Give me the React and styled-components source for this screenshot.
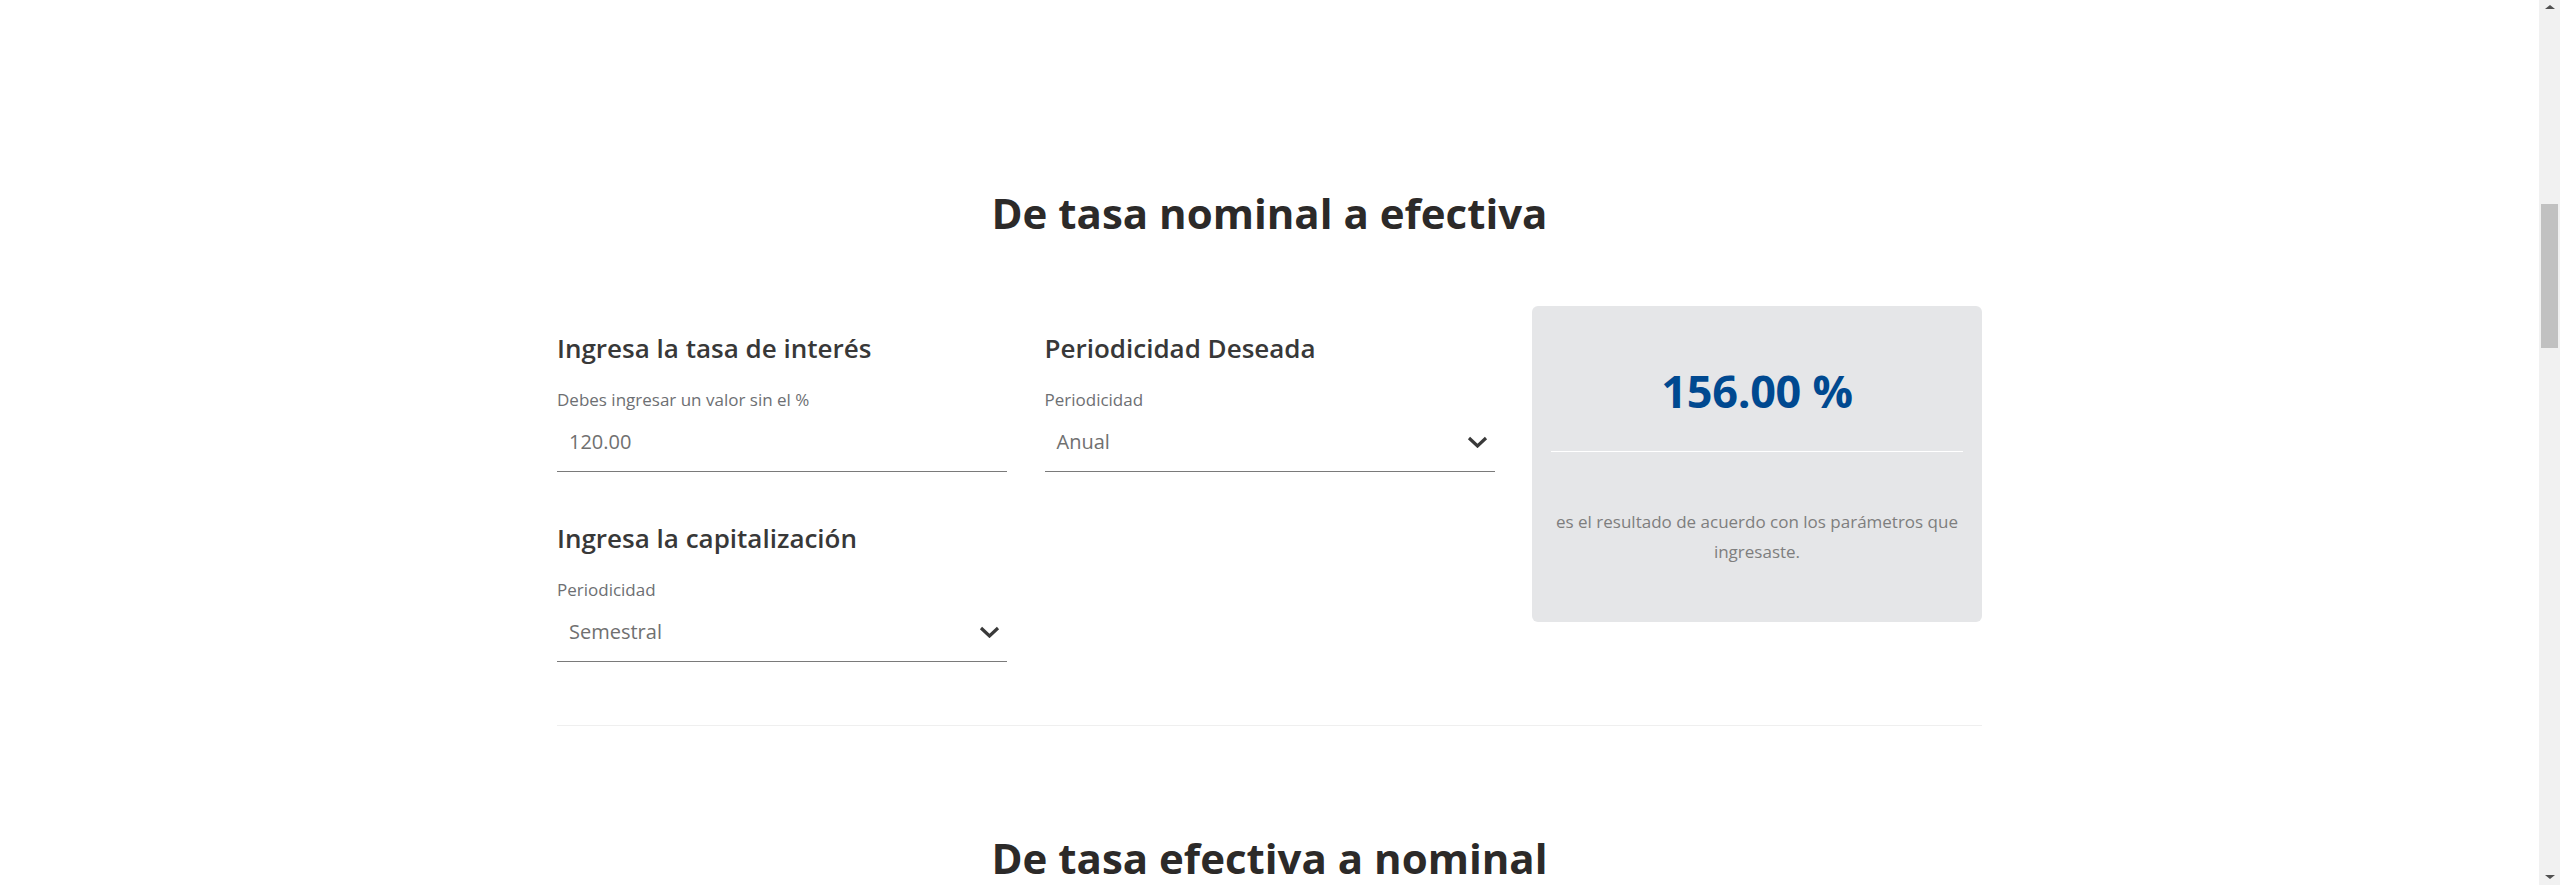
import React from "react";
import styled, { createGlobalStyle } from "styled-components";

const GlobalStyle = createGlobalStyle`
  html, body {
    margin: 0;
    padding: 0;
    height: 885px;
    overflow: hidden;
    background: #ffffff;
    font-family: "Open Sans", "Liberation Sans", sans-serif;
  }
  * { box-sizing: border-box; }
`;

const Page = styled.div`
  display: flex;
  width: 100%;
  height: 885px;
  overflow: hidden;
`;

const Main = styled.main`
  flex: 1;
  min-width: 0;
  padding-top: 187px;
`;

const Container = styled.div`
  width: 1425px;
  margin: 0 auto;
`;

const Title = styled.h2`
  margin: 0;
  text-align: center;
  font-family: "Open Sans", sans-serif;
  font-weight: 700;
  font-size: 42px;
  line-height: 52px;
  letter-spacing: 0;
  color: #2c2a29;
`;

const Grid = styled.div`
  display: grid;
  grid-template-columns: repeat(3, 450px);
  column-gap: 37.5px;
  row-gap: 24px;
  margin-top: 67px;
  align-items: start;
`;

const Field = styled.div`
  padding-top: 26px;
  grid-column: ${(p) => p.$col};
  grid-row: ${(p) => p.$row};
`;

const FieldHeading = styled.h3`
  margin: 0 0 24px;
  font-weight: 600;
  font-size: 26px;
  line-height: 32px;
  color: #383838;
`;

const Label = styled.label`
  display: block;
  font-size: 17px;
  line-height: 24px;
  color: #6d6f73;
`;

const InputBox = styled.div`
  display: flex;
  align-items: center;
  justify-content: space-between;
  padding: 18px 7px 17px 12px;
  border-bottom: 1px solid #7a7a7a;
`;

const Value = styled.span`
  font-size: 20px;
  line-height: 24px;
  color: #707070;
`;

const Chevron = styled.svg`
  width: 21px;
  height: 12px;
  flex: none;
`;

const Card = styled.div`
  grid-column: 3;
  grid-row: 1 / span 2;
  height: 316px;
  background: #e5e6e8;
  border-radius: 6px;
  padding: 57px 19px 0;
  text-align: center;
`;

const Result = styled.div`
  font-weight: 700;
  font-size: 45px;
  line-height: 56px;
  color: #004990;
  letter-spacing: -0.3px;
`;

const Divider = styled.hr`
  margin: 32px 0 0;
  border: 0;
  border-top: 1px solid #ffffff;
`;

const Caption = styled.p`
  margin: 55px 0 0;
  padding: 0;
  font-size: 17px;
  line-height: 30px;
  color: #7e7e7e;
`;

const Separator = styled.hr`
  margin: 63px 0 0;
  border: 0;
  border-top: 1px solid #efefef;
`;

const SecondTitle = styled(Title)`
  margin-top: 106px;
`;

const Scrollbar = styled.div`
  width: 21px;
  flex: none;
  height: 885px;
  background: #f1f1f1;
  display: flex;
  flex-direction: column;
  align-items: center;
`;

const Arrow = styled.div`
  width: 0;
  height: 0;
  margin: ${(p) => (p.$down ? "auto 0 6px" : "5px 0 0")};
  border-left: 5px solid transparent;
  border-right: 5px solid transparent;
  ${(p) =>
    p.$down
      ? "border-top: 4px solid #505050;"
      : "border-bottom: 4px solid #505050;"}
`;

const Thumb = styled.div`
  width: 17px;
  height: 144px;
  margin-top: 195px;
  background: #c1c1c1;
`;

const ChevronIcon = () => (
  <Chevron viewBox="0 0 21 12" aria-hidden="true">
    <path
      d="M2 2 L10.5 10 L19 2"
      fill="none"
      stroke="#3a3a3a"
      strokeWidth="3.2"
      strokeLinecap="butt"
      strokeLinejoin="miter"
    />
  </Chevron>
);

const FormField = ({ col, row, heading, label, value, select }) => (
  <Field $col={col} $row={row}>
    <FieldHeading>{heading}</FieldHeading>
    <Label>{label}</Label>
    <InputBox>
      <Value>{value}</Value>
      {select && <ChevronIcon />}
    </InputBox>
  </Field>
);

export default function App() {
  return (
    <>
      <GlobalStyle />
      <Page>
        <Main>
          <Container>
            <Title>De tasa nominal a efectiva</Title>
            <Grid>
              <FormField
                col={1}
                row={1}
                heading="Ingresa la tasa de interés"
                label="Debes ingresar un valor sin el %"
                value="120.00"
              />
              <FormField
                col={2}
                row={1}
                heading="Periodicidad Deseada"
                label="Periodicidad"
                value="Anual"
                select
              />
              <Card>
                <Result>156.00 %</Result>
                <Divider />
                <Caption>
                  es el resultado de acuerdo con los parámetros que ingresaste.
                </Caption>
              </Card>
              <FormField
                col={1}
                row={2}
                heading="Ingresa la capitalización"
                label="Periodicidad"
                value="Semestral"
                select
              />
            </Grid>
            <Separator />
            <SecondTitle>De tasa efectiva a nominal</SecondTitle>
          </Container>
        </Main>
        <Scrollbar>
          <Arrow />
          <Thumb />
          <Arrow $down />
        </Scrollbar>
      </Page>
    </>
  );
}
